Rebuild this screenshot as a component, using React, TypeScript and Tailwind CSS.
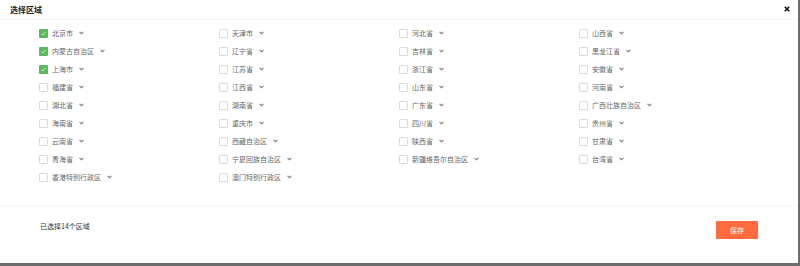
import { useState } from "react";

const REGIONS = [
  "北京市", "天津市", "河北省", "山西省",
  "内蒙古自治区", "辽宁省", "吉林省", "黑龙江省",
  "上海市", "江苏省", "浙江省", "安徽省",
  "福建省", "江西省", "山东省", "河南省",
  "湖北省", "湖南省", "广东省", "广西壮族自治区",
  "海南省", "重庆市", "四川省", "贵州省",
  "云南省", "西藏自治区", "陕西省", "甘肃省",
  "青海省", "宁夏回族自治区", "新疆维吾尔自治区", "台湾省",
  "香港特别行政区", "澳门特别行政区",
];

const font = { fontFamily: '"Noto Sans CJK SC", "Noto Sans", sans-serif' };

function Chevron() {
  return (
    <svg width="5" height="4" viewBox="0 0 5 4" className="text-[#777]">
      <polyline points="0.6,0.9 2.5,2.8 4.4,0.9" fill="none" stroke="currentColor" strokeWidth="1.1" />
    </svg>
  );
}

export default function App() {
  const [checked, setChecked] = useState<string[]>(["北京市", "内蒙古自治区", "上海市"]);

  function toggle(name: string) {
    setChecked((c) => (c.includes(name) ? c.filter((n) => n !== name) : [...c, name]));
  }

  return (
    <div
      className="w-[800px] h-[266px] bg-white flex flex-col border-r-[2px] border-b-[3px] border-[#6d6d6d]"
      style={font}
    >
      {/* Header */}
      <div className="h-[20px] flex items-center justify-between pl-[10px] pr-[8px] border-b border-[#f4f4f4]">
        <span className="text-[8px] font-bold text-[#222] leading-none">选择区域</span>
        <svg width="6" height="6" viewBox="0 0 6 6" className="mb-[1px]">
          <path d="M0.8 0.8 L5.2 5.2 M5.2 0.8 L0.8 5.2" stroke="#111" strokeWidth="1.6" />
        </svg>
      </div>

      {/* Region grid */}
      <div className="grid grid-cols-[180px_180px_180px_180px] auto-rows-[18px] pl-[39px] pt-[4px] h-[186px] border-b border-[#f4f4f4]">
        {REGIONS.map((name) => {
          const on = checked.includes(name);
          return (
            <div key={name} className="flex items-center cursor-pointer" onClick={() => toggle(name)}>
              {on ? (
                <span className="w-[9px] h-[9px] rounded-[1px] bg-[#5cb85c] flex items-center justify-center">
                  <svg width="7" height="7" viewBox="0 0 7 7">
                    <polyline points="1.3,3.6 2.9,5 5.7,2" fill="none" stroke="#d9f2d9" strokeWidth="0.9" />
                  </svg>
                </span>
              ) : (
                <span className="w-[9px] h-[9px] rounded-[1px] border border-[#dcdcdc] bg-white" />
              )}
              <span className="ml-[4px] text-[7px] text-[#666] leading-none">{name}</span>
              <span className="ml-[6px] flex items-center">
                <Chevron />
              </span>
            </div>
          );
        })}
      </div>

      {/* Footer */}
      <div className="flex-1 flex items-start justify-between pl-[40px] pr-[40px] pt-[15px]">
        <span className="text-[7px] text-[#333] leading-none mt-[2px]">已选择{checked.length + 11}个区域</span>
        <button className="w-[42px] h-[18px] bg-[#ff6a3f] text-white text-[7px] leading-none flex items-center justify-center rounded-[1px]">
          保存
        </button>
      </div>
    </div>
  );
}
